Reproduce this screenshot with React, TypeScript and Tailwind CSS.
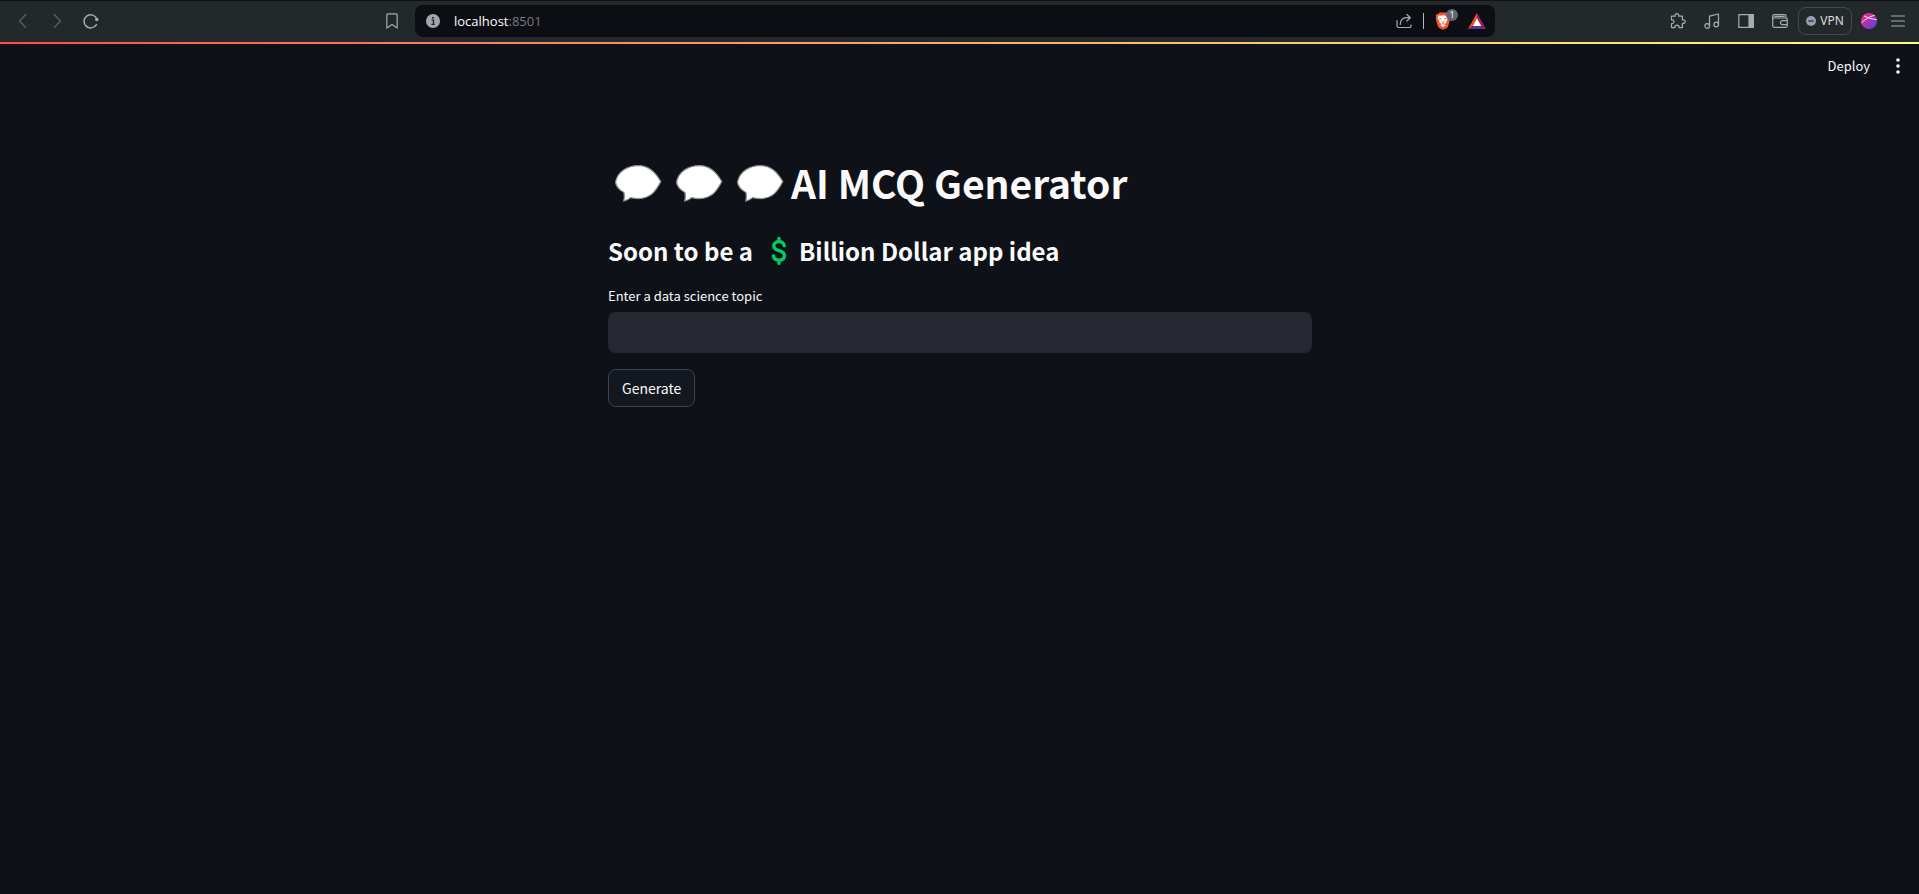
import { useState } from "react";
import type { ReactNode } from "react";

const appFont = "font-['Noto_Sans_CJK_SC',sans-serif]";
const chromeFont = "font-['Open_Sans',sans-serif]";

function IconButton({ label, className = "w-[34px]", children }: { label: string; className?: string; children: ReactNode }) {
  return (
    <button type="button" aria-label={label} className={`flex h-8 shrink-0 items-center justify-center ${className}`}>
      {children}
    </button>
  );
}

function Icon({ children, size = "size-4" }: { children: ReactNode; size?: string }) {
  return (
    <svg viewBox="0 0 16 16" className={size} fill="none" stroke="currentColor" strokeWidth="1.2" strokeLinecap="round" strokeLinejoin="round" aria-hidden="true">
      {children}
    </svg>
  );
}

function SpeechBubble() {
  return (
    <svg viewBox="0 -3 61 44" className="h-11 w-[61px] shrink-0" aria-hidden="true">
      <path
        d="M30.5 2.6C41 2.6 47.5 9 52.8 18.6C48 28 42.5 35.6 30.5 35.6C27.5 35.6 25 35.3 22.6 34.6C20.5 36.6 18.3 37.7 15.8 38.1C16.4 35.5 16.4 32.5 16 29.6C11.5 27 7.6 23.4 7.6 18.8C9.6 9 19 2.6 30.5 2.6Z"
        fill="#fff"
        stroke="#8b8b8b"
        strokeWidth="1.2"
      />
    </svg>
  );
}

function BrowserBar() {
  return (
    <header className={`flex h-[42px] items-center border-t border-[#0f1114] bg-[#23282b] pb-px text-[#a3adb2] ${chromeFont}`}>
      <nav className="flex grow basis-[415px] items-center px-1.5" aria-label="Navigation">
        <IconButton label="Back">
          <span className="text-[#596064]"><Icon><path d="M10.8 1.5 4.5 8l6.3 6.5" /></Icon></span>
        </IconButton>
        <IconButton label="Forward">
          <span className="text-[#596064]"><Icon><path d="M5.2 1.5 11.5 8l-6.3 6.5" /></Icon></span>
        </IconButton>
        <IconButton label="Reload">
          <Icon>
            <path d="M13.9 6.2A6.6 6.6 0 1 0 13.4 11.6" strokeWidth="1.5" />
            <circle cx="13.8" cy="6.5" r="1.7" fill="currentColor" stroke="none" />
          </Icon>
        </IconButton>
        <IconButton label="Bookmark" className="ml-auto w-[34px]">
          <Icon><path d="M4 .9h8a1.2 1.2 0 0 1 1.2 1.2v13L8 11.6l-5.2 3.5v-13A1.2 1.2 0 0 1 4 .9Z" /></Icon>
        </IconButton>
      </nav>
      <div className="flex h-8 w-[1080px] min-w-0 items-center rounded-lg bg-[#0d0e13] pr-px pl-[11px]">
        <svg viewBox="0 0 14 14" className="size-3.5 shrink-0" aria-hidden="true">
          <circle cx="7" cy="7" r="7" fill="#a1a5ad" />
          <path d="M5.6 6.1h1.9v4M5.4 10.3h3.4" stroke="#24262c" strokeWidth="1.3" fill="none" />
          <rect x="6" y="3" width="1.7" height="1.6" fill="#24262c" />
        </svg>
        <p className="ml-3.5 text-[13px] leading-5 text-[#777a80]">
          <span className="text-white">localhost</span>:8501
        </p>
        <div className="ml-auto flex items-center">
          <IconButton label="Share" className="w-7">
            <Icon>
              <path d="M1 7.5v5.3c0 1 .7 1.7 1.7 1.7h10.8c.9 0 1.5-.6 1.5-1.6v-.8" />
              <path d="M4.2 11.4C4.5 7.2 7 4.8 10.4 4.7h3.4M10.9 1.5l3.4 3.2-3.4 3.3" />
            </Icon>
          </IconButton>
          <span className="mr-0.5 ml-[5px] h-4 w-px bg-[#b5b8bd]" />
          <IconButton label="Shields">
            <span className="relative block">
              <svg viewBox="0 0 16 18" className="h-[18px] w-4" aria-hidden="true">
                <path d="M4.6.6h6.8l1.4 1.5 1.3-.1 1.3 1.8-.7 1.4.6 1.6-2.1 7.2c-.3 1-.8 1.4-1.5 1.9L8 17.8l-3.7-1.9c-.7-.5-1.2-.9-1.5-1.9L.7 6.8l.6-1.6-.7-1.4L1.9 2l1.3.1Z" fill="#fb542b" />
                <path d="m3.8 3.4 2.1.3L8 3.2l2.1.5 2.1-.3 1.3 2.5-2 3.2.2 1.5-2.2 1.3 1.1 1.4L8 15l-2.6-1.7 1.1-1.4-2.2-1.3.2-1.5-2-3.2Z" fill="#fff" />
                <path d="m4.2 6.4 2.4.6M11.8 6.4l-2.4.6M6.4 9.4 8 10.4l1.6-1M6.6 12.2 8 11.6l1.4.6" stroke="#fb542b" strokeWidth=".9" fill="none" />
              </svg>
              <span className="absolute -top-[3px] -right-[7px] flex size-3 items-center justify-center rounded-full bg-[#626673] text-[9px] leading-3 text-white">1</span>
            </span>
          </IconButton>
          <IconButton label="Rewards">
            <svg viewBox="0 0 18 16" className="h-4 w-[18px]" aria-hidden="true">
              <path d="m9 0 9 16-9-5Z" fill="#9e1f63" />
              <path d="M0 16h18l-5-3H5Z" fill="#5b3295" />
              <path d="M9 0v5.5L4.8 13 0 16Z" fill="#ff4724" />
              <path d="M9 5.2 13.2 13H4.8Z" fill="#fff" />
            </svg>
          </IconButton>
        </div>
      </div>
      <div className="flex grow basis-[424px] items-center justify-end pr-[9px]">
        <IconButton label="Extensions">
          <Icon>
            <path d="M1.5 3.2h3.7c-.5-1.5.4-2.6 1.7-2.6s2.2 1.1 1.7 2.6h3.8v3.7c1.6-.4 2.8.3 2.8 1.7s-1.2 2.1-2.8 1.7v4.3H9c.2-1.6-.7-2.5-2-2.5s-2.2.9-2 2.5H1.5v-4.1c1.5.2 2.4-.6 2.4-1.8s-.9-2-2.4-1.8Z" />
          </Icon>
        </IconButton>
        <IconButton label="Media">
          <Icon>
            <circle cx="3.2" cy="13" r="2.3" />
            <circle cx="12.2" cy="11.5" r="2.3" />
            <path d="M5.5 13V3.2L14.5 1v10.5" />
          </Icon>
        </IconButton>
        <IconButton label="Sidebar">
          <Icon>
            <path d="M.8 1.6h14.4v12.8H.8Z" />
            <path d="M11 1.6h4.2v12.8H11Z" fill="currentColor" />
          </Icon>
        </IconButton>
        <IconButton label="Wallet">
          <Icon>
            <path d="M14 5.2V3a1.4 1.4 0 0 0-1.4-1.4H2.2a1.6 1.6 0 0 0 0 3.4h11.6c.8 0 1.4.5 1.4 1.3v6.5c0 .9-.7 1.5-1.5 1.5H2.4c-1 0-1.7-.6-1.7-1.6V3.2" />
            <path d="M15.2 7.6h-4.7a2 2 0 0 0 0 4.1h4.7M2.6 3.3h9.6" />
          </Icon>
        </IconButton>
        <button type="button" className="ml-px flex h-7 w-[54px] shrink-0 items-center justify-center gap-1 rounded-lg border border-[#434a4e] text-xs text-[#e4e6e8]">
          <svg viewBox="0 0 10 10" className="size-2.5" aria-hidden="true">
            <circle cx="5" cy="5" r="5" fill="#9a9cb0" />
            <path d="M2.4 5h5.2" stroke="#33363f" strokeWidth="1.4" />
          </svg>
          VPN
        </button>
        <IconButton label="Profile">
          <svg viewBox="0 0 16 16" className="size-4" aria-hidden="true">
            <defs>
              <linearGradient id="profile" x1="0" y1="0" x2="1" y2="1">
                <stop offset="0" stopColor="#f0306f" />
                <stop offset=".5" stopColor="#b02fb4" />
                <stop offset="1" stopColor="#3455e0" />
              </linearGradient>
              <clipPath id="disc"><circle cx="8" cy="8" r="8" /></clipPath>
            </defs>
            <circle cx="8" cy="8" r="8" fill="url(#profile)" />
            <path d="M0 10.2C4 6.3 8.4 3.4 14 2.2M3 2.8c3.5 2 8.3 3.6 13 3.8" stroke="#fbdcf0" strokeWidth="1" fill="none" clipPath="url(#disc)" />
          </svg>
        </IconButton>
        <IconButton label="Menu" className="w-6">
          <Icon><path d="M1.5 3h13M1.5 8h13M1.5 13h13" /></Icon>
        </IconButton>
      </div>
    </header>
  );
}

export default function App() {
  const [topic, setTopic] = useState("");

  return (
    <div className="min-h-screen bg-[#0e1117] text-[#fafafa]">
      <BrowserBar />
      <div className="h-0.5 bg-linear-to-r from-[#ff4b4b] to-[#fffd80]" />
      <div className={`flex h-11 items-center justify-end gap-3 pr-[9px] ${appFont}`}>
        <button type="button" className="px-1 text-[13px] leading-5">Deploy</button>
        <button type="button" aria-label="Main menu" className="flex size-6 items-center justify-center">
          <svg viewBox="0 0 4 16" className="h-4 w-1" fill="#fafafa" aria-hidden="true">
            <circle cx="2" cy="2" r="1.8" />
            <circle cx="2" cy="8" r="1.8" />
            <circle cx="2" cy="14" r="1.8" />
          </svg>
        </button>
      </div>
      <main className={`mx-auto max-w-[705px] pt-16 pl-px ${appFont}`}>
        <h1 className="flex h-[60px] items-center text-[39px] leading-[60px] font-bold">
          <SpeechBubble />
          <SpeechBubble />
          <SpeechBubble />
          AI MCQ Generator
        </h1>
        <h2 className="mt-[19px] flex h-10 items-center text-2xl leading-10 font-bold">
          Soon to be a
          <svg viewBox="0 0 16 30" className="mr-3 ml-[18px] h-[30px] w-4" fill="none" stroke="#00cd62" strokeWidth="3.4" strokeLinecap="round" aria-hidden="true">
            <path d="M13.2 9.8C12.8 6.9 10.8 5.6 8 5.6C5 5.6 2.8 7.2 2.8 9.8C2.8 12.8 5 13.9 8 14.7C11.2 15.6 13.4 17 13.4 19.8C13.4 22.6 11.2 24.2 8 24.2C5 24.2 2.9 22.8 2.5 20M8 5V2.4M8 27.4V24.8" />
          </svg>
          Billion Dollar app idea
        </h2>
        <label htmlFor="topic" className="mt-[15px] block text-[13px] leading-5">Enter a data science topic</label>
        <input
          id="topic"
          type="text"
          value={topic}
          onChange={(event) => setTopic(event.target.value)}
          className="mt-1.5 block h-[41px] w-full rounded-lg bg-[#262730] px-3 text-sm outline-none"
        />
        <button type="button" className="mt-4 flex h-[38px] items-center rounded-lg border border-[#41444c] bg-[#131720] px-[13px] text-sm">
          Generate
        </button>
      </main>
    </div>
  );
}
